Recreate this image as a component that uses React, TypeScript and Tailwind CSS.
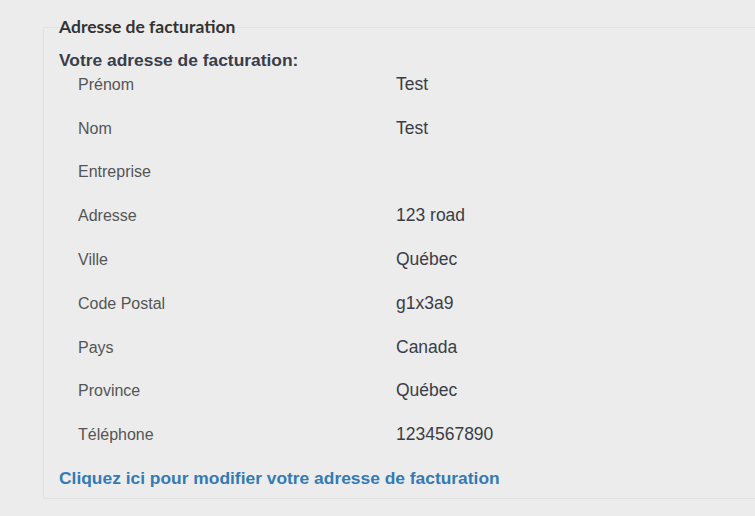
const rows: [string, string][] = [
  ["Prénom", "Test"],
  ["Nom", "Test"],
  ["Entreprise", ""],
  ["Adresse", "123 road"],
  ["Ville", "Québec"],
  ["Code Postal", "g1x3a9"],
  ["Pays", "Canada"],
  ["Province", "Québec"],
  ["Téléphone", "1234567890"],
];

export default function App() {
  return (
    <div className="h-[516px] w-[755px] overflow-hidden bg-[#ececec] font-['Liberation_Sans',Arial,sans-serif]">
      <fieldset className="ml-[43px] mt-[17px] w-[760px] border border-[#e2e2e2] pl-[15px] pb-[10px]">
        <legend className="font-['Lato',sans-serif] text-[17.5px] font-bold leading-[20px] text-[#333]">
          Adresse de facturation
        </legend>
        <h3 className="mt-[13px] text-[17.4px] font-bold leading-[20px] text-[#3a3d4a]">
          Votre adresse de facturation:
        </h3>
        <div className="mt-[4px] pl-[19px]">
          {rows.map(([label, value]) => (
            <div key={label} className="flex h-[43.75px] items-baseline">
              <span className="w-[318px] text-[16px] leading-[20px] text-[#555]">{label}</span>
              <span className="text-[17.5px] leading-[20px] text-[#3a3d47]">{value}</span>
            </div>
          ))}
        </div>
        <a href="#" className="block text-[17.4px] font-bold leading-[20px] text-[#337ab7]">
          Cliquez ici pour modifier votre adresse de facturation
        </a>
      </fieldset>
    </div>
  );
}
